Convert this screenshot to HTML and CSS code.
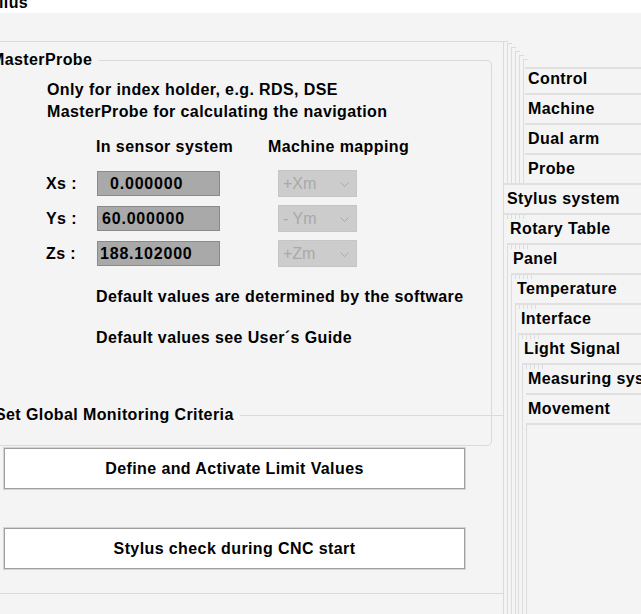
FILE: index.html
```html
<!DOCTYPE html>
<html>
<head>
<meta charset="utf-8">
<link rel="stylesheet" href="styles.css">
</head>
<body>
<div class="title"><span>ilus</span></div>
<div class="main">
  <div class="page">
    <section class="grp mp">
      <div class="grp-head"><span class="grp-title t-mp">MasterProbe</span></div>
      <div class="note">
        <div>Only for index holder, e.g. RDS, DSE</div>
        <div>MasterProbe for calculating the navigation</div>
      </div>
      <div class="chead"><span>In sensor system</span><span>Machine mapping</span></div>
      <div class="crow first">
        <span class="lbl">Xs :</span>
        <span class="val v1">0.000000</span>
        <span></span>
        <span class="sel">+Xm<svg class="chev" width="9" height="5" viewBox="0 0 9 5"><polyline points="0.5,0.5 4.5,4.5 8.5,0.5" fill="none" stroke="#a9a9a9"/></svg></span>
      </div>
      <div class="crow">
        <span class="lbl">Ys :</span>
        <span class="val v2">60.000000</span>
        <span></span>
        <span class="sel">- Ym<svg class="chev" width="9" height="5" viewBox="0 0 9 5"><polyline points="0.5,0.5 4.5,4.5 8.5,0.5" fill="none" stroke="#a9a9a9"/></svg></span>
      </div>
      <div class="crow">
        <span class="lbl">Zs :</span>
        <span class="val v3">188.102000</span>
        <span></span>
        <span class="sel">+Zm<svg class="chev" width="9" height="5" viewBox="0 0 9 5"><polyline points="0.5,0.5 4.5,4.5 8.5,0.5" fill="none" stroke="#a9a9a9"/></svg></span>
      </div>
      <div class="info">Default values are determined by the software</div>
      <div class="info">Default values see User´s Guide</div>
    </section>
    <section class="grp gm">
      <div class="grp-head"><span class="grp-title t-gm">Set Global Monitoring Criteria</span></div>
      <button class="btn b1">Define and Activate Limit Values</button>
      <button class="btn b2">Stylus check during CNC start</button>
    </section>
  </div>
  <div class="tabs">
    <div class="st s2">
      <div class="st s3">
        <div class="st s4">
          <div class="st s5">
            <div class="st s6">
              <div class="trow top first">Control</div>
              <div class="trow top">Machine</div>
              <div class="trow top">Dual arm</div>
              <div class="trow top">Probe</div>
            </div>
          </div>
        </div>
      </div>
    </div>
    <div class="trow cur">Stylus system</div>
    <div class="lv lv1">
      <div class="tl">Rotary Table</div>
      <div class="lv nest">
        <div class="tl">Panel</div>
        <div class="lv nest">
          <div class="tl">Temperature</div>
          <div class="lv nest">
            <div class="tl">Interface</div>
            <div class="lv nest n2">
              <div class="tl">Light Signal</div>
              <div class="lv nest">
                <div class="tl">Measuring system</div>
                <div class="tl mv">Movement</div>
                <div class="tabpage"></div>
              </div>
            </div>
          </div>
        </div>
      </div>
    </div>
  </div>
</div>
</body>
</html>
```
FILE: styles.css
```css
* { box-sizing: border-box; }
html, body { margin: 0; padding: 0; }
body {
  width: 641px;
  height: 614px;
  overflow: hidden;
  background: #f4f4f4;
  color: #000;
  font-family: "Liberation Sans", Arial, sans-serif;
  font-weight: bold;
  font-size: 16px;
  line-height: 22px;
  letter-spacing: 0.4px;
}

.title {
  height: 13px;
  background: #fff;
  overflow: hidden;
}
.title span {
  display: block;
  margin-top: -7px;
  margin-left: -1px;
  line-height: 20px;
}

.main {
  display: flex;
  margin-top: 28px;
  height: 573px;
}

/* ---------- left page ---------- */
.page {
  width: 503px;
  height: 553px;
  border-top: 1px solid #dadada;
  border-bottom: 1px solid #dadada;
}

.grp {
  margin-left: -12px;
  padding-left: 11px;
}
.grp-head {
  margin-top: -11px;
  height: 20px;
  line-height: 20px;
  white-space: nowrap;
}
.grp-title {
  display: inline-block;
  background: #f4f4f4;
  padding-right: 7px;
}
.t-mp { margin-left: -9px; }
.t-gm { margin-left: -4px; padding-right: 6px; }

.mp {
  margin-top: 18px;
  width: 504px;
  height: 386px;
  border: 1px solid #dadada;
  border-radius: 0 5px 5px 0;
}

.note {
  margin-left: 47px;
  margin-top: 9px;
}

.chead {
  display: grid;
  grid-template-columns: 96px 172px auto;
  margin-top: 13px;
}
.chead span:first-child { grid-column: 2; }

.crow {
  display: grid;
  grid-template-columns: 51px 123px 58px 79px;
  padding-left: 46px;
  height: 27px;
  align-items: center;
  margin-top: 8px;
}
.crow.first { margin-top: 12px; }

.val {
  height: 25px;
  background: #a9a9a9;
  border: 1px solid #8a8a8a;
  line-height: 23px;
  letter-spacing: 0.8px;
}
.v1 { padding-left: 12px; }
.v2 { padding-left: 4px; }
.v3 { padding-left: 2px; }

.sel {
  height: 27px;
  display: flex;
  align-items: center;
  background: #cccccc;
  border: 1px solid #c5c5c5;
  color: #a9a9a9;
  font-weight: normal;
  letter-spacing: 0;
  padding-left: 4px;
  white-space: pre;
}
.chev {
  margin-left: auto;
  margin-right: 7px;
  margin-top: 1px;
}

.info {
  margin-left: 96px;
  margin-top: 19px;
}

.gm {
  margin-top: -31px;
  width: 515px;
  border-top: 1px solid #dadada;
}

.btn {
  display: block;
  margin-left: 5px;
  width: 461px;
  height: 41px;
  padding: 0;
  background: #fff;
  border: 1px solid #9f9f9f;
  box-shadow: 0 0 0 1px #d4d4d4;
  font: inherit;
  letter-spacing: inherit;
  color: #000;
  text-align: center;
}
.b1 { margin-top: 23px; }
.b2 { margin-top: 39px; }

/* ---------- right tab stack ---------- */
.tabs {
  width: 138px;
  height: 573px;
  border-left: 1px solid #dadada;
  display: flex;
  flex-direction: column;
  background: linear-gradient(#dadada, #dadada) no-repeat 0 0 / 4px 1px;
  white-space: nowrap;
  overflow: hidden;
}

.st {
  display: flow-root;
  margin-left: 3px;
  border-left: 1px solid #dcdcdc;
  background: linear-gradient(#dcdcdc, #dcdcdc) no-repeat 0 0 / 4px 1px;
}
.s2 { margin-top: 2px; }
.s3, .s4, .s5, .s6 { margin-top: 4px; }

.trow {
  border-top: 2px solid #e0e0e0;
  line-height: 28px;
}
.trow.top {
  margin-left: 1px;
  padding-left: 3px;
}
.trow.top.first {
  margin-top: 8px;
  line-height: 20px;
  padding-bottom: 4px;
}
.trow.cur {
  padding-left: 3px;
}

.lv {
  flex: 1;
  display: flex;
  flex-direction: column;
  border-top: 2px solid #e0e0e0;
}
.lv.nest {
  margin-left: 3px;
  border-left: 1px solid #dcdcdc;
}
.lv.nest.n2 { margin-left: 2px; }

.tl {
  line-height: 28px;
  padding-left: 5px;
  background: repeating-linear-gradient(90deg, #dcdcdc 0 1px, transparent 1px 4px) no-repeat 3px 0 / 17px 4px;
}
.lv1 > .tl { padding-left: 6px; }
.tl.mv {
  margin-left: 3px;
  padding-left: 2px;
  border-top: 2px solid #e0e0e0;
  background: none;
}
.tabpage {
  flex: 1;
  margin-left: 3px;
  border-left: 1px solid #dcdcdc;
  border-top: 2px solid #e0e0e0;
}
```
